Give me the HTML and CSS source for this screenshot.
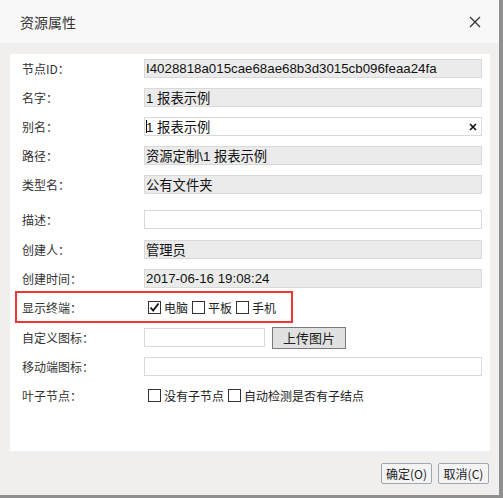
FILE: index.html
```html
<!DOCTYPE html>
<html lang="zh-CN">
<head>
    <meta charset="UTF-8">
    <title>资源属性</title>
    <link rel="stylesheet" href="styles.css">
</head>
<body>
    <div class="dialog">
        <div class="dialog-header">
            <span class="dialog-title">资源属性</span>
            <svg class="close" width="12" height="12" viewBox="0 0 12 12">
                <path d="M1 1 L11 11 M11 1 L1 11" stroke="#333" stroke-width="1.3"/>
            </svg>
        </div>
        <div class="dialog-body">
            <div class="row">
                <label>节点ID：</label>
                <input class="field readonly" type="text" value="I4028818a015cae68ae68b3d3015cb096feaa24fa" readonly>
            </div>
            <div class="row">
                <label>名字：</label>
                <input class="field readonly" type="text" value="1 报表示例" readonly>
            </div>
            <div class="row">
                <label>别名：</label>
                <div class="field-wrap">
                    <input class="field" type="text" value="1 报表示例">
                    <span class="caret"></span>
                    <svg class="clear" width="8" height="8" viewBox="0 0 8 8">
                        <path d="M1 1 L7 7 M7 1 L1 7" stroke="#111" stroke-width="1.6"/>
                    </svg>
                </div>
            </div>
            <div class="row">
                <label>路径：</label>
                <input class="field readonly" type="text" value="资源定制\1 报表示例" readonly>
            </div>
            <div class="row">
                <label>类型名：</label>
                <input class="field readonly" type="text" value="公有文件夹" readonly>
            </div>
            <div class="row row-desc">
                <label>描述：</label>
                <input class="field" type="text" value="">
            </div>
            <div class="row">
                <label>创建人：</label>
                <input class="field readonly" type="text" value="管理员" readonly>
            </div>
            <div class="row">
                <label>创建时间：</label>
                <input class="field readonly" type="text" value="2017-06-16 19:08:24" readonly>
            </div>
            <div class="row row-terminal">
                <label>显示终端：</label>
                <span class="check checked">
                    <svg width="11" height="11" viewBox="0 0 11 11">
                        <path d="M1.5 5.5 L4.2 8.5 L9.5 1.5" fill="none" stroke="#111" stroke-width="1.8"/>
                    </svg>
                </span>
                <span class="check-text">电脑</span>
                <span class="check"></span>
                <span class="check-text">平板</span>
                <span class="check"></span>
                <span class="check-text">手机</span>
            </div>
            <div class="row">
                <label>自定义图标：</label>
                <input class="field short" type="text" value="">
                <button class="upload" type="button">上传图片</button>
            </div>
            <div class="row">
                <label>移动端图标：</label>
                <input class="field" type="text" value="">
            </div>
            <div class="row">
                <label>叶子节点：</label>
                <span class="check"></span>
                <span class="check-text">没有子节点</span>
                <span class="check"></span>
                <span class="check-text">自动检测是否有子结点</span>
            </div>
        </div>
        <div class="dialog-footer">
            <button class="btn" type="button">确定(O)</button>
            <button class="btn" type="button">取消(C)</button>
        </div>
    </div>
</body>
</html>
```

FILE: styles.css
```css
body {
    margin: 0;
    background: #8f8f8f;
    font-family: "Liberation Sans", "Noto Sans CJK SC", sans-serif;
}
.dialog {
    width: 499px;
    height: 495px;
    background: #f0efee;
}
.dialog-header {
    height: 43px;
    background: #f8f8f8;
    display: flex;
    align-items: center;
    justify-content: space-between;
    padding: 0 18px 0 20px;
}
.dialog-title {
    font-family: "Noto Sans CJK SC", sans-serif;
    font-size: 14px;
    color: #333;
}
.dialog-body {
    margin: 11px 9px 0 10px;
    height: 397px;
    background: #fff;
    box-sizing: border-box;
    padding-right: 8px;
}
.row {
    height: 29px;
    display: flex;
    align-items: center;
}
.row label {
    width: 122px;
    padding-left: 12px;
    flex-shrink: 0;
    font-family: "Noto Sans CJK SC", sans-serif;
    font-size: 12px;
    color: #333;
}
.row-desc {
    height: 32px;
    margin-top: 4px;
}
.field {
    width: 338px;
    height: 19px;
    box-sizing: border-box;
    border: 1px solid #d9d9d9;
    padding: 0 1px;
    margin: 0;
    font-family: "Liberation Sans", "Noto Sans CJK SC", sans-serif;
    font-size: 13.3px;
    color: #111;
    background: #fff;
    outline: none;
}
.field.readonly {
    background: #ebebeb;
}
.field.short {
    width: 121px;
}
.field-wrap {
    position: relative;
    display: flex;
}
.caret {
    position: absolute;
    left: 2px;
    top: 3px;
    width: 1px;
    height: 13px;
    background: #000;
}
.clear {
    position: absolute;
    right: 5px;
    top: 6px;
}
.row-terminal {
    height: 28px;
    margin: -2px 0 0 5px;
    width: 274px;
    border: 2px solid #f03636;
}
.row-terminal label {
    width: 122px;
    padding-left: 5px;
}
.check {
    width: 13px;
    height: 13px;
    box-sizing: border-box;
    border: 1px solid #333;
    background: #fff;
    margin-left: 4px;
    flex-shrink: 0;
    display: flex;
    align-items: center;
    justify-content: center;
}
.check-text {
    font-family: "Noto Sans CJK SC", sans-serif;
    font-size: 12px;
    color: #222;
    margin-left: 3px;
}
.upload {
    margin-left: 7px;
    height: 22px;
    width: 74px;
    border: 1px solid #7a7a7a;
    background: #e1e1e1;
    font-family: "Noto Sans CJK SC", sans-serif;
    font-size: 13px;
    color: #222;
    padding: 0;
}
.dialog-footer {
    display: flex;
    justify-content: flex-end;
    gap: 6px;
    padding: 12px 10px 0 0;
}
.btn {
    width: 51px;
    height: 21px;
    padding: 0;
    border: 1px solid #9fa7b3;
    border-radius: 2px;
    background: #f4f4f4;
    font-family: "Noto Sans CJK SC", sans-serif;
    font-size: 12px;
    color: #222;
}
```
